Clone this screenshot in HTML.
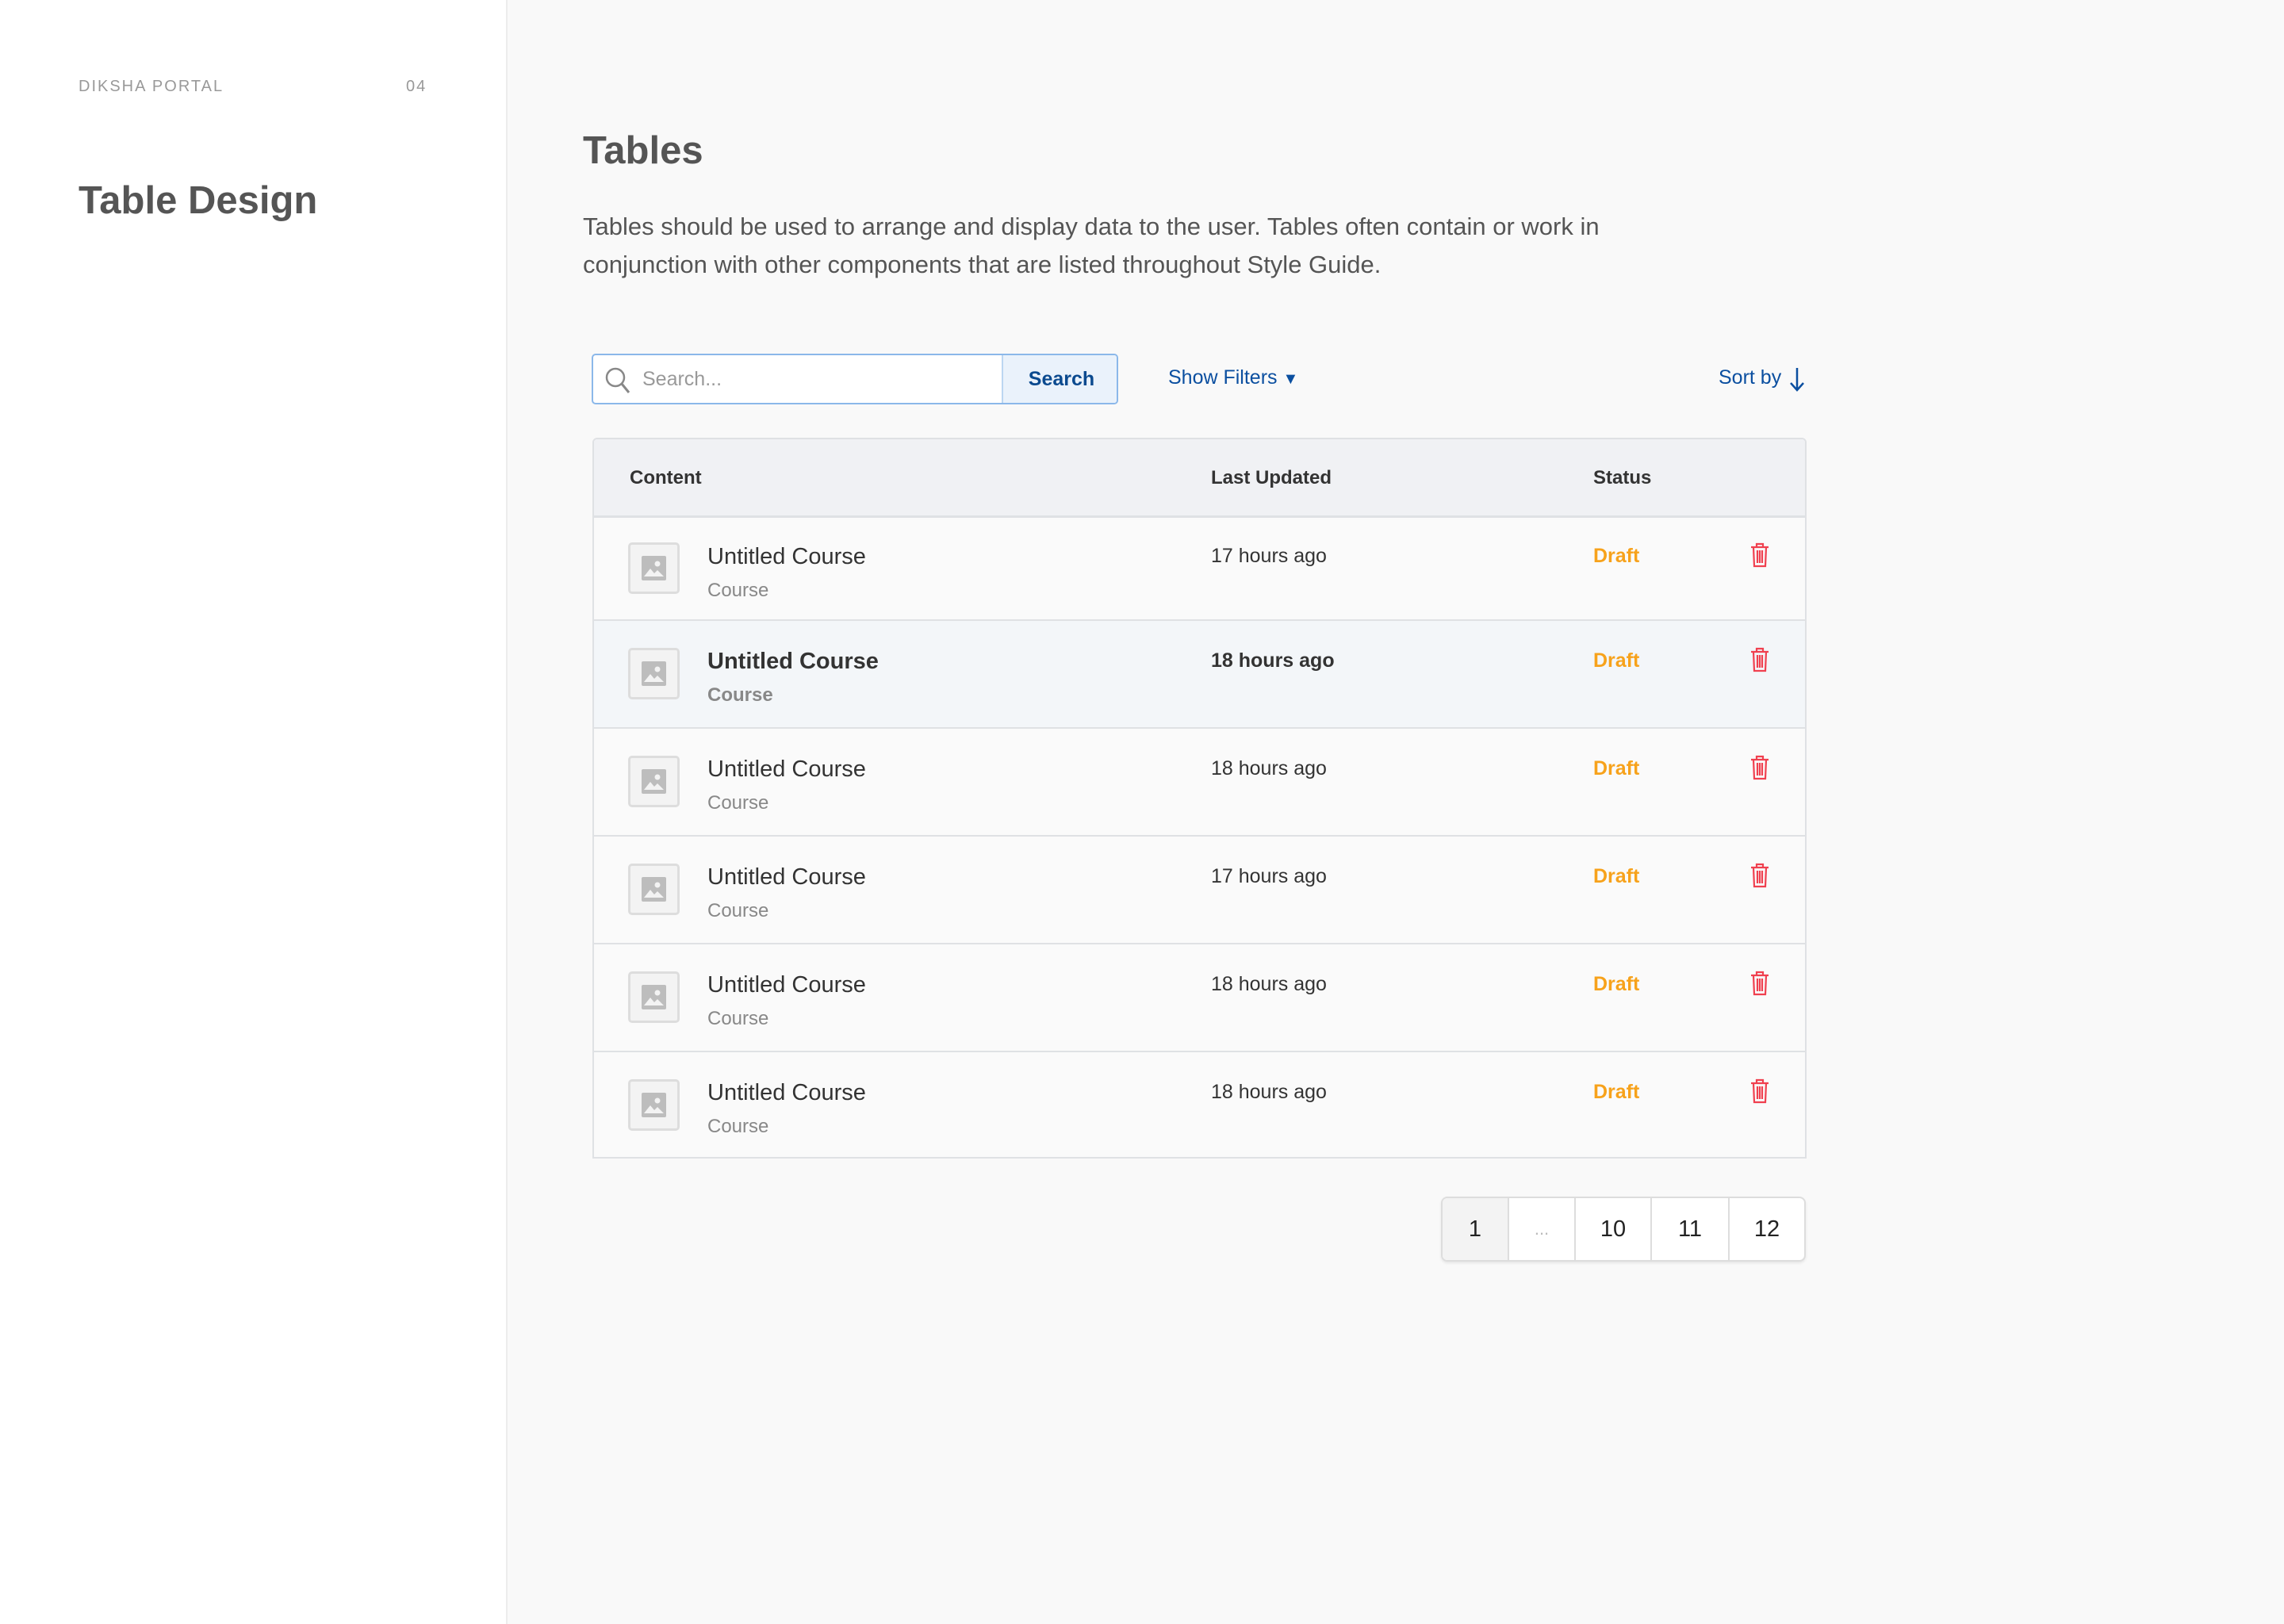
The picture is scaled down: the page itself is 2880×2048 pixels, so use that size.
<!DOCTYPE html>
<html><head><style>
*{margin:0;padding:0;box-sizing:border-box}
body{width:2880px;height:2048px;background:#f9f9f9;font-family:"Liberation Sans",sans-serif;position:relative;overflow:hidden;color:#333}
.side{position:absolute;left:0;top:0;width:640px;height:2048px;background:#fff;border-right:2px solid #ececec}
.abs{position:absolute;white-space:nowrap}
.tbl{position:absolute;left:747px;top:552px;width:1531px;height:909px;border:2px solid #dfe1e4;border-radius:6px 6px 0 0;background:#fafafa;overflow:hidden}
.hd{height:99px;background:#f0f1f4;border-bottom:3px solid #dfe1e4;position:relative;font-weight:bold;font-size:24px;color:#333}
.row{height:136px;border-bottom:2px solid #dfe1e4;position:relative}
.row.hl{background:#f3f6f9}
.row:last-child{border-bottom:none}
.th{position:absolute;left:43px;top:34px;width:65px;height:65px;border:3px solid #ddd;border-radius:5px;background:#f3f3f3}
.th svg{position:absolute;left:14px;top:14px}
.t1{position:absolute;left:143px;top:35px;font-size:29px;color:#333}
.t2{position:absolute;left:143px;top:80px;font-size:24px;color:#888}
.t3{position:absolute;left:778px;top:36px;font-size:25px;color:#333}
.t4{position:absolute;left:1260px;top:36px;font-size:25px;color:#f7a21b;font-weight:bold}
.tr{position:absolute;left:1457px;top:33px}
.hl .t1,.hl .t3,.hl .t2{font-weight:bold}
.pg{position:absolute;left:1817px;top:1509px;width:460px;height:82px;border:2px solid #ddd;border-radius:8px;background:#fff;display:flex;overflow:hidden;box-shadow:0 2px 3px rgba(0,0,0,.08)}
.pg div{border-right:2px solid #ddd;display:flex;align-items:center;justify-content:center;font-size:29px;color:#222}
.pg div:last-child{border-right:none}
</style></head><body>
<div class="side">
<div class="abs" style="left:99px;top:98px;font-size:20px;letter-spacing:2px;color:#999">DIKSHA PORTAL</div>
<div class="abs" style="left:512px;top:98px;font-size:20px;letter-spacing:2px;color:#999">04</div>
<div class="abs" style="left:99px;top:225px;font-size:49px;color:#555;font-weight:bold">Table Design</div>
</div>
<div class="abs" style="left:735px;top:162px;font-size:49px;color:#555;font-weight:bold">Tables</div>
<div class="abs" style="left:735px;top:262px;font-size:31px;line-height:48px;color:#555;white-space:normal;width:1330px">Tables should be used to arrange and display data to the user. Tables often contain or work in conjunction with other components that are listed throughout Style Guide.</div>

<div class="abs" style="left:746px;top:446px;width:664px;height:64px;border:2px solid #8bb8ea;border-radius:5px;background:#fff;overflow:hidden">
<svg style="position:absolute;left:14px;top:14px" width="34" height="36" viewBox="0 0 34 36"><circle cx="14" cy="14" r="11" fill="none" stroke="#888" stroke-width="2.5"/><path d="M22 22 L31 33" stroke="#888" stroke-width="3"/></svg>
<div class="abs" style="left:62px;top:16px;font-size:25px;color:#999">Search...</div>
<div style="position:absolute;left:515px;top:0;width:149px;height:62px;background:#eaf2fb;border-left:2px solid #bcd6f1;font-size:25px;font-weight:bold;color:#0b4a8f;text-align:center;line-height:60px">Search</div>
</div>
<div class="abs" style="left:1473px;top:462px;font-size:25px;color:#0b4fa0">Show Filters <span style="font-size:20px">▼</span></div>
<div class="abs" style="top:462px;font-size:25px;color:#0b4fa0;left:2167px">Sort by</div>
<svg class="abs" style="left:2256px;top:462px" width="20" height="34" viewBox="0 0 20 34"><path d="M10 2 V30 M2 21 L10 30 L18 21" fill="none" stroke="#0b4fa0" stroke-width="2.5"/></svg>

<div class="tbl">
<div class="hd"><span class="abs" style="left:45px;top:35px">Content</span><span class="abs" style="left:778px;top:35px">Last Updated</span><span class="abs" style="left:1260px;top:35px">Status</span></div>
<div class="row" style="height:130px"><div class="th" style="top:31px"><svg width="31" height="31" viewBox="0 0 31 31"><rect width="31" height="31" rx="2" fill="#bdbdbd"/><circle cx="20" cy="10" r="3.5" fill="#f3f3f3"/><path d="M3 26 L11 16 L16 22 L20 18 L28 26Z" fill="#f3f3f3"/></svg></div><div class="t1" style="top:33px">Untitled Course</div><div class="t2" style="top:78px">Course</div><div class="t3" style="top:34px">17 hours ago</div><div class="t4" style="top:34px">Draft</div><svg class="tr" style="top:31px" width="26" height="32" viewBox="0 0 26 32"><path d="M2 6H24M9 6V2H17V6M5 6L6 30H20L21 6M10 10V26M13 10V26M16 10V26" fill="none" stroke="#f0404f" stroke-width="2.2"/></svg></div>
<div class="row hl"><div class="th"><svg width="31" height="31" viewBox="0 0 31 31"><rect width="31" height="31" rx="2" fill="#bdbdbd"/><circle cx="20" cy="10" r="3.5" fill="#f3f3f3"/><path d="M3 26 L11 16 L16 22 L20 18 L28 26Z" fill="#f3f3f3"/></svg></div><div class="t1">Untitled Course</div><div class="t2">Course</div><div class="t3">18 hours ago</div><div class="t4">Draft</div><svg class="tr" width="26" height="32" viewBox="0 0 26 32"><path d="M2 6H24M9 6V2H17V6M5 6L6 30H20L21 6M10 10V26M13 10V26M16 10V26" fill="none" stroke="#f0404f" stroke-width="2.2"/></svg></div>
<div class="row"><div class="th"><svg width="31" height="31" viewBox="0 0 31 31"><rect width="31" height="31" rx="2" fill="#bdbdbd"/><circle cx="20" cy="10" r="3.5" fill="#f3f3f3"/><path d="M3 26 L11 16 L16 22 L20 18 L28 26Z" fill="#f3f3f3"/></svg></div><div class="t1">Untitled Course</div><div class="t2">Course</div><div class="t3">18 hours ago</div><div class="t4">Draft</div><svg class="tr" width="26" height="32" viewBox="0 0 26 32"><path d="M2 6H24M9 6V2H17V6M5 6L6 30H20L21 6M10 10V26M13 10V26M16 10V26" fill="none" stroke="#f0404f" stroke-width="2.2"/></svg></div>
<div class="row"><div class="th"><svg width="31" height="31" viewBox="0 0 31 31"><rect width="31" height="31" rx="2" fill="#bdbdbd"/><circle cx="20" cy="10" r="3.5" fill="#f3f3f3"/><path d="M3 26 L11 16 L16 22 L20 18 L28 26Z" fill="#f3f3f3"/></svg></div><div class="t1">Untitled Course</div><div class="t2">Course</div><div class="t3">17 hours ago</div><div class="t4">Draft</div><svg class="tr" width="26" height="32" viewBox="0 0 26 32"><path d="M2 6H24M9 6V2H17V6M5 6L6 30H20L21 6M10 10V26M13 10V26M16 10V26" fill="none" stroke="#f0404f" stroke-width="2.2"/></svg></div>
<div class="row"><div class="th"><svg width="31" height="31" viewBox="0 0 31 31"><rect width="31" height="31" rx="2" fill="#bdbdbd"/><circle cx="20" cy="10" r="3.5" fill="#f3f3f3"/><path d="M3 26 L11 16 L16 22 L20 18 L28 26Z" fill="#f3f3f3"/></svg></div><div class="t1">Untitled Course</div><div class="t2">Course</div><div class="t3">18 hours ago</div><div class="t4">Draft</div><svg class="tr" width="26" height="32" viewBox="0 0 26 32"><path d="M2 6H24M9 6V2H17V6M5 6L6 30H20L21 6M10 10V26M13 10V26M16 10V26" fill="none" stroke="#f0404f" stroke-width="2.2"/></svg></div>
<div class="row"><div class="th"><svg width="31" height="31" viewBox="0 0 31 31"><rect width="31" height="31" rx="2" fill="#bdbdbd"/><circle cx="20" cy="10" r="3.5" fill="#f3f3f3"/><path d="M3 26 L11 16 L16 22 L20 18 L28 26Z" fill="#f3f3f3"/></svg></div><div class="t1">Untitled Course</div><div class="t2">Course</div><div class="t3">18 hours ago</div><div class="t4">Draft</div><svg class="tr" width="26" height="32" viewBox="0 0 26 32"><path d="M2 6H24M9 6V2H17V6M5 6L6 30H20L21 6M10 10V26M13 10V26M16 10V26" fill="none" stroke="#f0404f" stroke-width="2.2"/></svg></div>
</div>

<div class="pg">
<div style="width:84px;background:#f3f3f3">1</div>
<div style="width:84px;color:#bbb;font-size:22px">...</div>
<div style="width:96px">10</div>
<div style="width:98px">11</div>
<div style="flex:1">12</div>
</div>
</body></html>
